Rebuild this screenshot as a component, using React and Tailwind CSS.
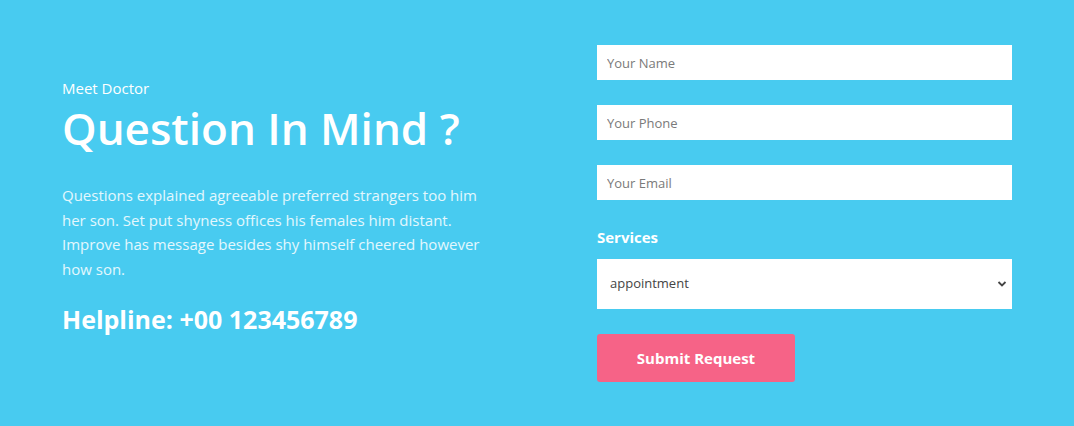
import React from "react";

export default function App() {
  return (
    <div
      className="w-full min-h-[426px] bg-[#48cbf0] flex justify-between items-start px-[62px] py-[45px]"
      style={{ fontFamily: '"Open Sans", "Liberation Sans", sans-serif' }}
    >
      <div className="w-[440px] flex flex-col mt-[36px]">
        <p className="text-white text-[15px] leading-[14px]">Meet Doctor</p>
        <h2 className="text-white text-[44px] leading-[60px] font-semibold mt-[3px]">Question In Mind ?</h2>
        <p className="text-white/85 text-[15px] leading-[24.5px] mt-[25px] w-[436px]">
          Questions explained agreeable preferred strangers too him her son. Set put shyness offices his females him distant. Improve has message besides shy himself cheered however how son.
        </p>
        <p className="text-white text-[25px] leading-[32px] font-bold mt-[22px]">Helpline: +00 123456789</p>
      </div>
      <form className="w-[415px] flex flex-col">
        <input
          className="h-[35px] bg-white px-[10px] text-[13px] text-[#555] placeholder:text-[#7a7a7a] outline-none"
          placeholder="Your Name"
        />
        <input
          className="h-[35px] bg-white px-[10px] text-[13px] text-[#555] placeholder:text-[#7a7a7a] outline-none mt-[25px]"
          placeholder="Your Phone"
        />
        <input
          className="h-[35px] bg-white px-[10px] text-[13px] text-[#555] placeholder:text-[#7a7a7a] outline-none mt-[25px]"
          placeholder="Your Email"
        />
        <label className="text-white text-[15px] font-bold leading-[20px] mt-[27px]">Services</label>
        <div className="relative mt-[12px] h-[50px] bg-white">
          <select className="appearance-none w-full h-full bg-transparent pl-[13px] text-[13px] text-[#444] outline-none">
            <option>appointment</option>
          </select>
          <svg className="absolute right-[5px] top-[21px] pointer-events-none" width="10" height="8" viewBox="0 0 10 8">
            <path d="M1.5 2 L5 5.5 L8.5 2" stroke="#444" strokeWidth="1.8" fill="none" />
          </svg>
        </div>
        <button
          type="button"
          className="mt-[25px] w-[198px] h-[48px] rounded-[3px] bg-[#f66387] text-white text-[15px] font-bold"
        >
          Submit Request
        </button>
      </form>
    </div>
  );
}
